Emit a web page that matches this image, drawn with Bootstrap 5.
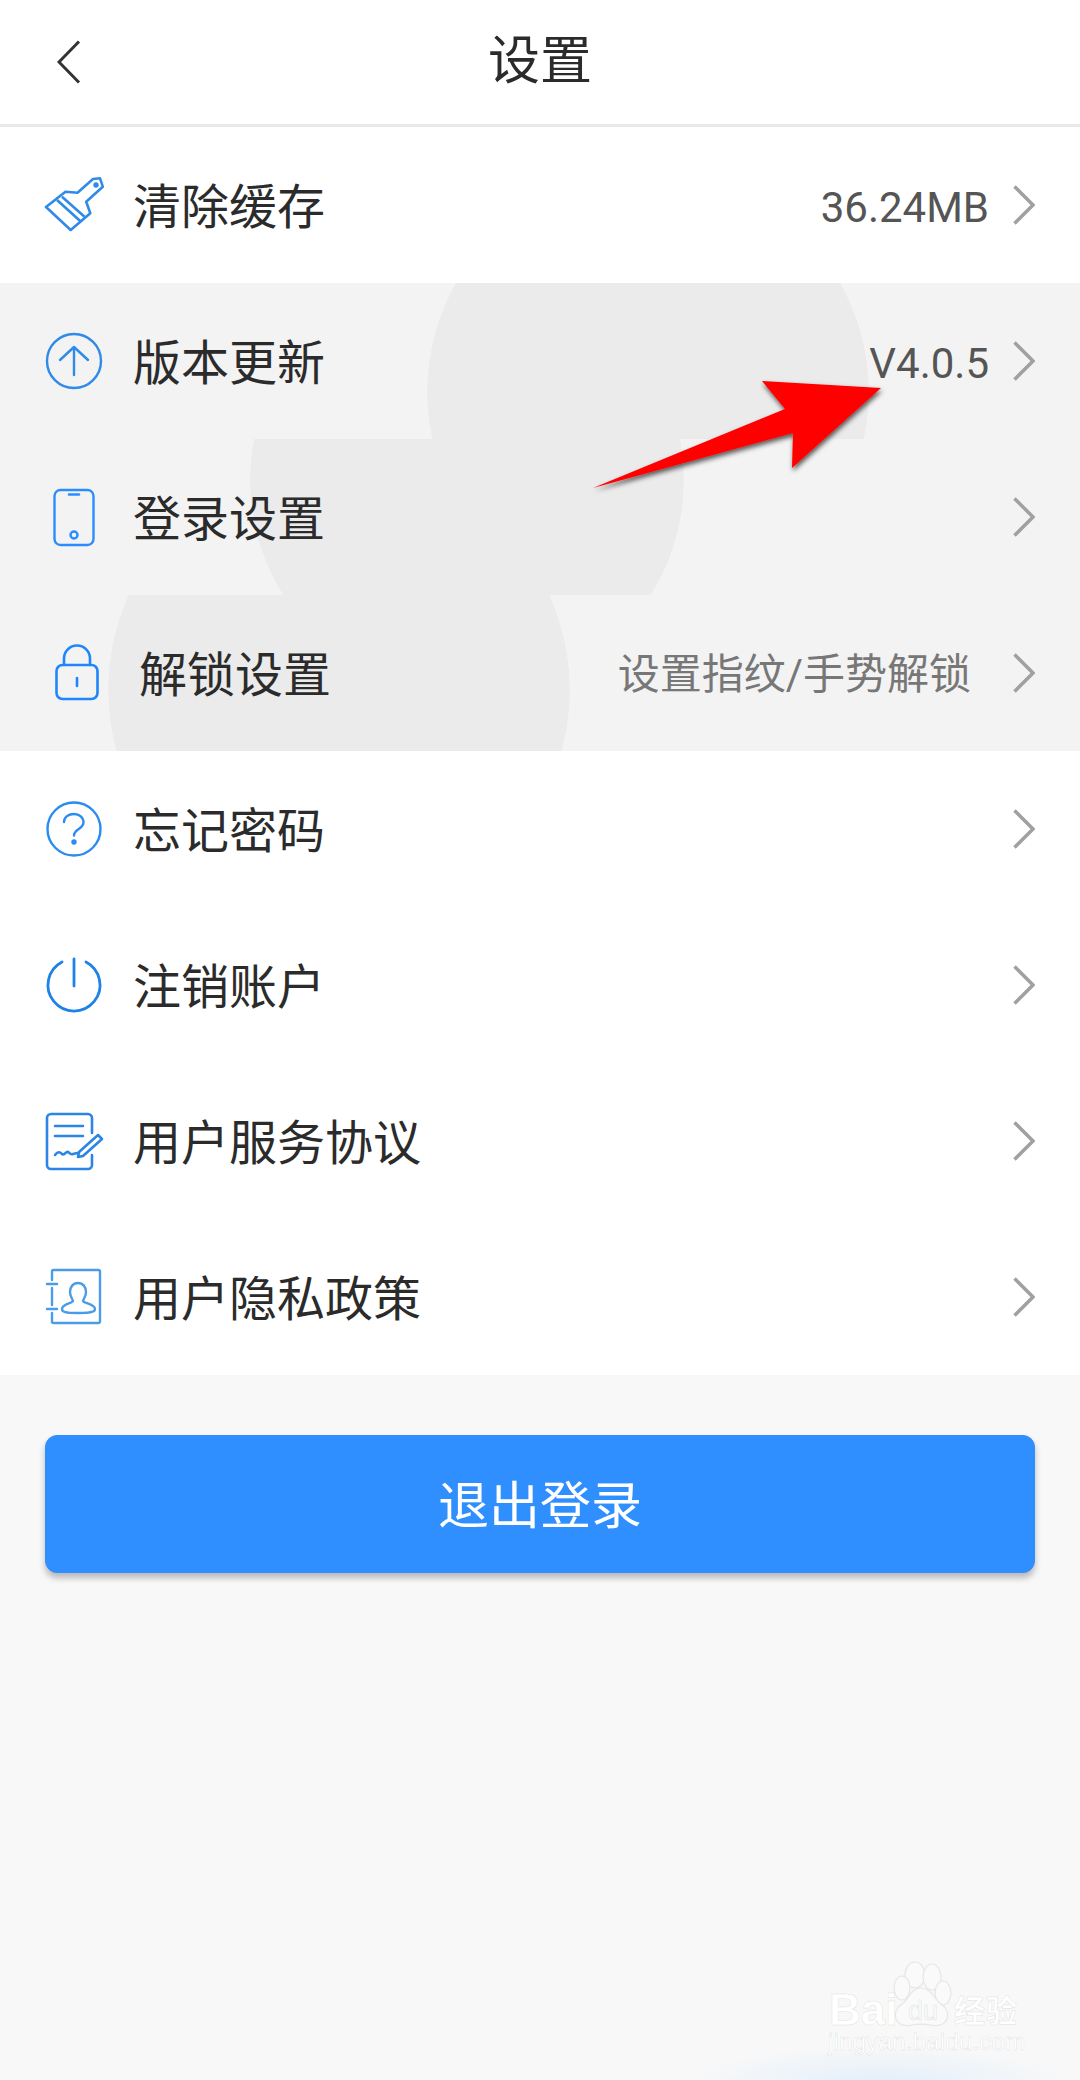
<!DOCTYPE html>
<html lang="zh-CN">
<head>
    <meta charset="UTF-8">
    <meta name="viewport" content="width=device-width, initial-scale=1.0">
    <title>设置</title>
    <link rel="stylesheet" href="https://cdn.jsdelivr.net/npm/bootstrap@5.3.0/dist/css/bootstrap.min.css">
    <style>
        html, body { width: 1080px; height: 2080px; overflow: hidden; }
        body {
            font-family: Roboto, "Noto Sans CJK SC", sans-serif;
            color: #2b2b2b;
            background: radial-gradient(ellipse 190px 40px at 880px 2085px, #e2eefa 0%, #f8f8f8 100%) #f8f8f8;
            position: relative;
        }
        .top-bar {
            display: grid;
            grid-template-columns: 1fr auto 1fr;
            align-items: center;
            height: 127px;
            background: #fff;
            border-bottom: 3px solid #e9e9e9;
        }
        .top-back { padding-left: 57px; line-height: 0; }
        .top-title { font-size: 52px; line-height: 1; color: #2b2b2b; }
        .set-list { border-radius: 0; --bs-list-group-bg: #fff; }
        .set-row {
            height: 156px;
            padding: 0 45px 0 44px;
            border: 0;
            font-size: 48px;
            line-height: 1;
            color: #2b2b2b;
        }
        .set-row.pressed-a { background: radial-gradient(circle 221px at 648px 109px, #ebebeb 99.7%, #f3f3f3 100%); }
        .set-row.pressed-b { background: radial-gradient(circle 217px at 467px 41px, #ebebeb 99.7%, #f3f3f3 100%); }
        .set-row.pressed-c { background: radial-gradient(circle 231px at 339px 95px, #ebebeb 99.7%, #f3f3f3 100%); }
        .row-icon { width: 60px; height: 60px; flex: none; margin-right: 29px; }
        .row-name { flex: 1 1 auto; padding-top: 5px; }
        .row-value { font-size: 42px; color: #555; margin-right: 24px; padding-top: 5px; }
        .row-hint { font-size: 42px; color: #777; margin-right: 42px; padding-top: 3px; }
        .row-arrow { width: 22px; height: 40px; flex: none; }
        .shift-right { padding-left: 47px; }
        .shift-right .row-icon { margin-right: 32px; }
        .logout-wrap { padding: 60px 45px 0; }
        .logout-btn {
            --bs-btn-bg: #308ffe;
            --bs-btn-hover-bg: #308ffe;
            --bs-btn-border-color: #308ffe;
            --bs-btn-hover-border-color: #308ffe;
            height: 138px;
            padding: 5px 0 0;
            font-size: 51px;
            line-height: 1;
            border-radius: 12px;
            box-shadow: 0 5px 6px rgba(0, 0, 0, .25);
        }
        .red-arrow { position: absolute; left: 580px; top: 370px; width: 320px; height: 130px; }
        .stamp { position: absolute; left: 820px; top: 1960px; width: 220px; height: 110px; color: #fff; }
        .stamp span { position: absolute; white-space: nowrap; -webkit-text-stroke: 1px rgba(0, 0, 0, .08); }
        .stamp-bai { left: 9px; top: 32px; font: 700 44px/.8 "Liberation Sans", sans-serif; }
        .stamp-du { left: 88px; top: 38px; font: 400 27px/1 "Liberation Sans", sans-serif; color: #f8f8f8; }
        .stamp-cn { left: 134px; top: 33px; font: 700 31px/1 "Noto Sans CJK SC", sans-serif; letter-spacing: 1px; }
        .stamp-url { left: 8px; top: 70px; font: 400 24.5px/1 "Liberation Sans", sans-serif; }
    </style>
</head>
<body>
    <div class="top-bar">
        <div class="top-back">
            <svg width="24" height="44" viewBox="0 0 24 44" fill="none" stroke="#333" stroke-width="3">
                <path d="M22 1.500 2 22l20 20.500"/>
            </svg>
        </div>
        <div class="top-title">设置</div>
        <div></div>
    </div>

    <div class="list-group list-group-flush set-list">
        <div class="list-group-item d-flex align-items-center set-row">
            <svg class="row-icon" viewBox="0 -1 60 60" fill="none" stroke="#2f8ae8" stroke-width="2.600" stroke-linejoin="round">
                <path d="M2 31 21.500 15.700l12 1L49 3l7-.7 2.800 8.400-16.600 15 4.100 11.600L26.700 54z"/>
                <path d="M13 24l24 21.700M18 20.700l22.500 20"/>
                <circle cx="52" cy="9" r="1.400"/>
            </svg>
            <span class="row-name">清除缓存</span>
            <span class="row-value">36.24MB</span>
            <svg class="row-arrow" viewBox="0 0 22 40" fill="none" stroke="#a0a0a0" stroke-width="3.500"><path d="M1.500 1.500 20 20 1.500 38.500"/></svg>
        </div>
        <div class="list-group-item d-flex align-items-center set-row pressed-a">
            <svg class="row-icon" viewBox="0 -1 60 60" fill="none" stroke="#2f8ae8" stroke-width="2.400" stroke-linecap="round" stroke-linejoin="round">
                <circle cx="30" cy="29" r="27"/>
                <path d="M30 43V16M16 28l14-13 14 13"/>
            </svg>
            <span class="row-name">版本更新</span>
            <span class="row-value">V4.0.5</span>
            <svg class="row-arrow" viewBox="0 0 22 40" fill="none" stroke="#a0a0a0" stroke-width="3.500"><path d="M1.500 1.500 20 20 1.500 38.500"/></svg>
        </div>
        <div class="list-group-item d-flex align-items-center set-row pressed-b">
            <svg class="row-icon" viewBox="0 0 60 60" fill="none" stroke="#2a8cff" stroke-width="2.400" stroke-linecap="round">
                <rect x="10.500" y="3" width="39" height="55" rx="6"/>
                <path d="M25 7.500h10"/>
                <circle cx="30" cy="48" r="3.500"/>
            </svg>
            <span class="row-name">登录设置</span>
            <svg class="row-arrow" viewBox="0 0 22 40" fill="none" stroke="#a0a0a0" stroke-width="3.500"><path d="M1.500 1.500 20 20 1.500 38.500"/></svg>
        </div>
        <div class="list-group-item d-flex align-items-center set-row shift-right pressed-c">
            <svg class="row-icon" viewBox="0 -1 60 60" fill="none" stroke="#1f86fb" stroke-width="2.600" stroke-linecap="round">
                <rect x="9.500" y="21" width="41" height="34" rx="6"/>
                <path d="M17 21v-6.500a13 13 0 0 1 26 0V21M30 34v8"/>
            </svg>
            <span class="row-name">解锁设置</span>
            <span class="row-hint">设置指纹/手势解锁</span>
            <svg class="row-arrow" viewBox="0 0 22 40" fill="none" stroke="#a0a0a0" stroke-width="3.500"><path d="M1.500 1.500 20 20 1.500 38.500"/></svg>
        </div>
        <div class="list-group-item d-flex align-items-center set-row">
            <svg class="row-icon" viewBox="0 0 60 60" fill="none" stroke="#2a8cf0" stroke-width="2.400" stroke-linecap="round">
                <circle cx="30" cy="30" r="26.500"/>
                <path d="M20 23c0-5 4.500-8 10-8s9.500 3.500 9.500 8.500c0 6.500-9.500 6.500-9.500 13"/>
                <circle cx="30" cy="43" r="1.500" fill="#2a8cf0"/>
            </svg>
            <span class="row-name">忘记密码</span>
            <svg class="row-arrow" viewBox="0 0 22 40" fill="none" stroke="#a0a0a0" stroke-width="3.500"><path d="M1.500 1.500 20 20 1.500 38.500"/></svg>
        </div>
        <div class="list-group-item d-flex align-items-center set-row">
            <svg class="row-icon" viewBox="0 0 60 60" fill="none" stroke="#1f82e6" stroke-width="2.800" stroke-linecap="round">
                <path d="M18 7a26 26 0 1 0 24 0M30 4v27"/>
            </svg>
            <span class="row-name">注销账户</span>
            <svg class="row-arrow" viewBox="0 0 22 40" fill="none" stroke="#a0a0a0" stroke-width="3.500"><path d="M1.500 1.500 20 20 1.500 38.500"/></svg>
        </div>
        <div class="list-group-item d-flex align-items-center set-row">
            <svg class="row-icon" viewBox="0 -1 60 60" fill="none" stroke="#2a85e5" stroke-width="2.600" stroke-linecap="round" stroke-linejoin="round">
                <path d="M48 21V6a4 4 0 0 0-4-4H7a4 4 0 0 0-4 4v47a4 4 0 0 0 4 4h37a4 4 0 0 0 4-4V43"/>
                <path d="M11 14h28M11 24h28"/>
                <path d="M11 43c3-4 5-3 7-1s4-3 6-2 2 3 5 2 4-1 6-1"/>
                <path d="M35 40l19-17 4 4-19 17-5 1z"/>
            </svg>
            <span class="row-name">用户服务协议</span>
            <svg class="row-arrow" viewBox="0 0 22 40" fill="none" stroke="#a0a0a0" stroke-width="3.500"><path d="M1.500 1.500 20 20 1.500 38.500"/></svg>
        </div>
        <div class="list-group-item d-flex align-items-center set-row">
            <svg class="row-icon" viewBox="0 -1 60 60" fill="none" stroke="#4a9be8" stroke-width="2.400" stroke-linecap="round" stroke-linejoin="round">
                <path d="M8 12V3.500a1.500 1.500 0 0 1 1.500-1.500h45A1.500 1.500 0 0 1 56 3.500v50a1.500 1.500 0 0 1-1.500 1.500h-45A1.500 1.500 0 0 1 8 53.500V45M8 20v17M3 16h10M3 41h10"/>
                <path d="M34 15c5 0 8 4 8 9 0 4-2 6-3 9 0 2 12 3 12 8 0 3-4 4-17 4s-16-1-16-4c0-5 11-6 11-8-1-3-3-5-3-9 0-5 3-9 8-9z"/>
            </svg>
            <span class="row-name">用户隐私政策</span>
            <svg class="row-arrow" viewBox="0 0 22 40" fill="none" stroke="#a0a0a0" stroke-width="3.500"><path d="M1.500 1.500 20 20 1.500 38.500"/></svg>
        </div>
    </div>

    <div class="logout-wrap">
        <button type="button" class="btn btn-primary w-100 logout-btn">退出登录</button>
    </div>

    <!-- annotation drawn over the screenshot -->
    <svg class="red-arrow" viewBox="0 0 320 130">
        <defs>
            <filter id="arrowShadow" x="-10%" y="-10%" width="120%" height="130%">
                <feDropShadow dx="1" dy="3" stdDeviation="2.500" flood-color="#000" flood-opacity=".65"/>
            </filter>
        </defs>
        <path d="M13 118 205 39 182 11 301 18 212 98 213 63z" fill="#f00" filter="url(#arrowShadow)"/>
    </svg>

    <div class="stamp">
        <svg class="position-absolute top-0 start-0" width="220" height="110" viewBox="0 0 220 110" fill="#fafafa" stroke="#e6e6e6" stroke-width="1.200">
            <ellipse cx="95" cy="15" rx="10" ry="13"/>
            <ellipse cx="112" cy="17" rx="9" ry="13"/>
            <ellipse cx="82" cy="28" rx="8" ry="12"/>
            <ellipse cx="123" cy="33" rx="8" ry="12"/>
            <path d="M101 28c-10 0-12 11-19 16-6 4-8 10-6 15 3 7 11 7 16 6 6-1 13-1 19 0 5 1 13 1 16-6 2-5 0-11-6-15-7-5-10-16-20-16z"/>
        </svg>
        <span class="stamp-bai">Bai</span>
        <span class="stamp-du">du</span>
        <span class="stamp-cn">经验</span>
        <span class="stamp-url">jingyan.baidu.com</span>
    </div>
</body>
</html>
